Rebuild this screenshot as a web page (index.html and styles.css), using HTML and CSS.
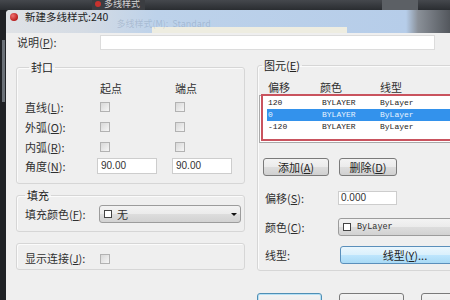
FILE: index.html
```html
<!DOCTYPE html>
<html lang="zh-CN">
<head>
    <meta charset="UTF-8">
    <meta name="viewport" content="width=device-width, initial-scale=1.0">
    <title>新建多线样式:240</title>
    <link rel="stylesheet" href="styles.css">
</head>
<body>
    <!-- 背后的标签栏 -->
    <div class="top">
        <div class="tab"><span class="tab-logo"></span>多线样式</div>
        <div class="cap-btn"></div>
    </div>

    <div class="desk">
        <div class="side"><div class="thumb"></div></div>

        <div class="dlg">
            <div class="title">
                <span class="logo"></span>
                <span class="title-text">新建多线样式:240</span>
                <span class="ghost">多线样式(M):&nbsp;&nbsp;Standard</span>
            </div>

            <div class="panel">
                <div class="desc">
                    <span class="desc-label">说明(<u>P</u>):</span>
                    <span class="field wide"></span>
                </div>

                <div class="cols">
                    <!-- 左边: 封口 / 填充 / 显示连接 -->
                    <div class="left">
                        <fieldset class="grp caps">
                            <legend>封口</legend>
                            <div class="cap-grid">
                                <span></span><span class="hd">起点</span><span class="hd">端点</span>
                                <span>直线(<u>L</u>):</span><span class="chk"></span><span class="chk"></span>
                                <span>外弧(<u>O</u>):</span><span class="chk"></span><span class="chk"></span>
                                <span>内弧(<u>R</u>):</span><span class="chk"></span><span class="chk"></span>
                                <span>角度(<u>N</u>):</span><span class="field num">90.00</span><span class="field num">90.00</span>
                            </div>
                        </fieldset>

                        <fieldset class="grp fill">
                            <legend>填充</legend>
                            <div class="row">
                                <span class="lbl">填充颜色(<u>F</u>):</span>
                                <div class="combo fill-combo"><span class="swatch"></span><span>无</span><span class="arrow"></span></div>
                            </div>
                        </fieldset>

                        <div class="grp join">
                            <span class="lbl">显示连接(<u>J</u>):</span><span class="chk"></span>
                        </div>
                    </div>

                    <!-- 右边: 图元 -->
                    <div class="right">
                        <fieldset class="grp elems">
                            <legend>图元(<u>E</u>)</legend>
                            <div class="list-head"><span>偏移</span><span>颜色</span><span>线型</span></div>
                            <div class="list">
                                <div class="mark">
                                    <div class="item"><span>120</span><span>BYLAYER</span><span>ByLayer</span></div>
                                    <div class="item sel"><span>0</span><span>BYLAYER</span><span>ByLayer</span></div>
                                    <div class="item"><span>-120</span><span>BYLAYER</span><span>ByLayer</span></div>
                                </div>
                            </div>
                            <div class="btns">
                                <button class="btn add">添加(<u>A</u>)</button>
                                <button class="btn del">删除(<u>D</u>)</button>
                            </div>
                            <div class="prop off-row">
                                <span class="plbl">偏移(<u>S</u>):</span>
                                <span class="field off">0.000</span>
                            </div>
                            <div class="prop color-row">
                                <span class="plbl">颜色(<u>C</u>):</span>
                                <div class="combo color-combo"><span class="swatch"></span><span class="mono">ByLayer</span></div>
                            </div>
                            <div class="prop lt-row">
                                <span class="plbl">线型:</span>
                                <button class="btn hot">线型(<u>Y</u>)...</button>
                            </div>
                        </fieldset>

                        <div class="actions">
                            <button class="btn ok">确定</button>
                            <button class="btn">取消</button>
                            <button class="btn">帮助(<u>H</u>)</button>
                        </div>
                    </div>
                </div>
            </div>
        </div>
    </div>
</body>
</html>
```

FILE: styles.css
```css
html, body {
    margin: 0;
    width: 450px;
    height: 300px;
    overflow: hidden;
}
body {
    background: #2b2e33;
    font-family: "Noto Sans CJK SC", "Liberation Sans", sans-serif;
    font-size: 11px;
    color: #2f2f2f;
}
u {
    text-decoration-thickness: 1px;
}

/* 背后的标签栏 */
.top {
    height: 10px;
    display: flex;
    overflow: hidden;
    background: linear-gradient(#45484d, #2a2d31);
}
.tab {
    margin-left: 92px;
    width: 50px;
    padding-left: 3px;
    display: flex;
    gap: 3px;
    align-items: flex-start;
    background: #3b3d41;
    color: #d4d4d4;
    font-size: 9px;
    line-height: 8px;
}
.tab-logo {
    width: 6px;
    height: 6px;
    margin-top: 1px;
    border-radius: 50%;
    background: #c8322e;
}
.cap-btn {
    margin-left: auto;
    margin-right: 32px;
    width: 36px;
    background: #5c6065;
}

.desk {
    display: flex;
    height: 290px;
}
.side {
    width: 4px;
    padding-left: 2px;
    background: #1f2125;
}
.thumb {
    width: 3px;
    height: 62px;
    margin-top: 30px;
    background: #6a7077;
}

.dlg {
    flex: 1;
    min-width: 0;
    overflow: hidden;
    background: #efefef;
    border-top-left-radius: 4px;
}

/* 标题栏 */
.title {
    height: 23px;
    display: flex;
    align-items: flex-start;
    background:
        linear-gradient(#eeede1, #eeede1) no-repeat 146px 17px / 195px 6px,
        linear-gradient(to right, #dfe2e6 0, #d4dbe4 80px, #bdd2ea 150px, #b6cde9 400px, #8a9098 412px, #53575d 444px);
}
.logo {
    width: 8px;
    height: 8px;
    margin: 3px 0 0 4px;
    border-radius: 50%;
    background: radial-gradient(circle at 35% 35%, #f07070, #b81e1e 70%);
}
.title-text {
    margin-left: 7px;
    font-size: 10.5px;
    line-height: 13px;
    color: #222;
}
.ghost {
    margin: 9px 0 0 8px;
    font-size: 9px;
    line-height: 10px;
    color: rgba(70, 95, 130, 0.22);
}

.panel {
    padding: 2px 0 0 10px;
}
.desc {
    display: flex;
    align-items: center;
    height: 15px;
}
.desc-label {
    width: 83px;
    margin-left: 1px;
    line-height: 13px;
}

.field {
    box-sizing: border-box;
    display: block;
    background: #fff;
    border: 1px solid #cdcdcd;
    font-family: "Liberation Sans", sans-serif;
    font-size: 10px;
    line-height: 14px;
    padding-left: 2px;
    color: #333;
}
.field.wide {
    width: 335px;
    height: 15px;
    border-color: #dcdcdc;
}

.cols {
    display: flex;
    gap: 12px;
    margin-top: 9px;
}
.left {
    width: 229px;
    flex-shrink: 0;
    padding-top: 2px;
}
.right {
    width: 230px;
    flex-shrink: 0;
}

/* 分组框 */
.grp {
    margin: 0;
    padding: 0;
    min-width: 0;
    border: 1px solid #d6d6d6;
    border-radius: 3px;
    box-shadow: inset 1px 1px 0 #fbfbfb;
}
legend {
    margin-left: 4px;
    padding: 0 2px;
    line-height: 12px;
    color: #222;
}
.fill legend {
    margin-left: 0;
}

.caps {
    padding: 6px 0 8px 8px;
}
.cap-grid {
    display: grid;
    grid-template-columns: 72px 75px 75px;
    grid-template-rows: 18px 20px 20px 20px 18px;
    align-items: center;
    line-height: 13px;
}
.hd {
    padding-left: 3px;
}
.chk {
    box-sizing: border-box;
    width: 10px;
    height: 10px;
    margin-left: 3px;
    border: 1px solid #b2b2b2;
    background: linear-gradient(135deg, #d8d8d8, #f6f6f6);
}
.field.num {
    width: 60px;
    height: 16px;
    padding-left: 3px;
}

.fill {
    margin-top: 5px;
    padding: 4px 0 8px 8px;
}
.row {
    display: flex;
    align-items: center;
}
.lbl {
    width: 74px;
    line-height: 13px;
}

.combo {
    box-sizing: border-box;
    height: 18px;
    display: flex;
    align-items: center;
    gap: 5px;
    padding-left: 4px;
    border: 1px solid #9c9c9c;
    border-radius: 3px;
    background: linear-gradient(#f3f3f3, #ebebeb 50%, #dddddd 50%, #d2d2d2);
    line-height: 13px;
}
.fill-combo {
    width: 142px;
}
.swatch {
    box-sizing: border-box;
    width: 8px;
    height: 8px;
    border: 1px solid #444;
    background: #fff;
}
.arrow {
    margin-left: auto;
    margin-right: 3px;
    width: 0;
    height: 0;
    border-left: 3px solid transparent;
    border-right: 3px solid transparent;
    border-top: 3px solid #111;
}

.join {
    margin-top: 11px;
    height: 27px;
    box-sizing: border-box;
    padding-left: 8px;
    display: flex;
    align-items: center;
}
.join .lbl {
    width: 75px;
    padding-top: 4px;
}
.join .chk {
    margin-left: 0;
    margin-top: 4px;
}

/* 图元 */
.elems {
    margin-left: 0;
    padding: 9px 0 6px 1px;
}
.elems legend {
    margin-left: 3px;
}
.list-head {
    display: grid;
    grid-template-columns: 52px 60px 1fr;
    height: 14px;
    padding-left: 9px;
    line-height: 14px;
}
.list {
    box-sizing: border-box;
    height: 48px;
    margin-top: 1px;
    border: 1px solid #a9a9a9;
    background: #fff;
}
.mark {
    box-sizing: border-box;
    height: 47px;
    margin: -2px 0 0 1px;
    padding-top: 1px;
    border: 2px solid #c9535e;
    border-right: none;
}
.item {
    display: grid;
    grid-template-columns: 54px 58px 1fr;
    height: 12px;
    margin-left: 4px;
    padding-left: 1px;
    font-family: "Liberation Mono", monospace;
    font-size: 8px;
    line-height: 12px;
    color: #222;
}
.item.sel {
    background: #3392ec;
    color: #e8f4ff;
}

.btn {
    box-sizing: border-box;
    height: 18px;
    padding: 0;
    font: inherit;
    line-height: 14px;
    color: #222;
    border: 1px solid #7a7a7a;
    border-radius: 3px;
    background: linear-gradient(#f3f3f3, #ebebeb 50%, #dddddd 50%, #d0d0d0);
}
.btns {
    display: flex;
    gap: 10px;
    margin-top: 15px;
    padding-left: 4px;
}
.add {
    width: 66px;
}
.del {
    width: 58px;
}

.prop {
    display: flex;
    align-items: center;
    padding-left: 6px;
}
.plbl {
    width: 73px;
    line-height: 13px;
}
.off-row {
    height: 16px;
    margin-top: 14px;
}
.field.off {
    width: 59px;
    height: 14px;
    line-height: 12px;
}
.color-row {
    height: 18px;
    margin-top: 12px;
}
.color-combo {
    width: 130px;
    gap: 6px;
}
.mono {
    font-family: "Liberation Mono", monospace;
    font-size: 8.5px;
}
.lt-row {
    height: 18px;
    margin-top: 10px;
}
.btn.hot {
    width: 130px;
    margin-left: 2px;
    border-color: #5a8fbb;
    background: linear-gradient(#eaf6fd, #d9f0fc 50%, #bee6fd 50%, #a9daf5);
}

.actions {
    display: flex;
    gap: 17px;
    margin-top: 22px;
}
.actions .btn {
    width: 65px;
    height: 22px;
    padding-top: 2px;
    line-height: 13px;
    vertical-align: top;
}
.btn.ok {
    border-color: #4f8fb5;
    box-shadow: inset 0 0 0 1px #b6e0f5;
}
```
